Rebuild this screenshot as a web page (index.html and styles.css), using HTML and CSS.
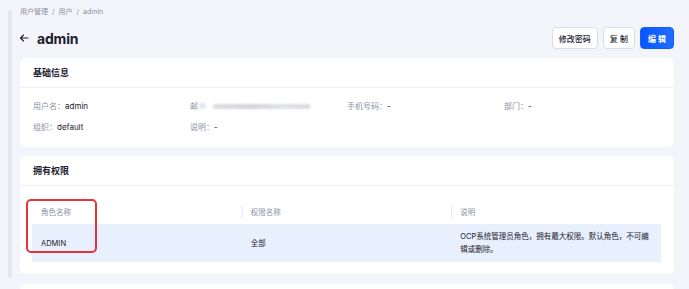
FILE: index.html
```html
<!DOCTYPE html>
<html lang='zh-CN'>
<head>
	<meta charset='UTF-8'>
	<meta name='viewport' content='width=device-width, initial-scale=1.0'>
	<title>用户 - admin</title>
	<link rel="stylesheet" href="styles.css">
</head>
<body>
	<div class='page'>
		<div class='rail'></div>
		<div class='main'>
			<div class='crumbs'>
				<span>用户管理</span><span class='sep'>/</span><span>用户</span><span class='sep'>/</span><span>admin</span>
			</div>

			<div class='title-row'>
				<div class='title'>
					<svg class='back' width='10' height='10' viewBox='0 0 10 10'>
						<path d='M9 5H1.5M4.5 2L1.5 5l3 3' fill='none' stroke='#1c2130' stroke-width='1.1' stroke-linecap='round' stroke-linejoin='round'/>
					</svg>
					<span>admin</span>
				</div>
				<div class='actions'>
					<button class='btn'>修改密码</button>
					<button class='btn'>复 制</button>
					<button class='btn btn-primary'>编 辑</button>
				</div>
			</div>

			<div class='card'>
				<div class='card-head'>基础信息</div>
				<div class='info-grid'>
					<div><span class='lbl'>用户名：</span>admin</div>
					<div><span class='lbl'>邮</span><span class='blur-a'></span><span class='blur-b'></span></div>
					<div><span class='lbl'>手机号码：</span>-</div>
					<div><span class='lbl'>部门：</span>-</div>
					<div><span class='lbl'>组织：</span>default</div>
					<div><span class='lbl'>说明：</span>-</div>
				</div>
			</div>

			<div class='card'>
				<div class='card-head'>拥有权限</div>
				<div class='card-body'>
					<div class='table'>
						<div class='th'>角色名称</div>
						<div class='th th-sep'>权限名称</div>
						<div class='th th-sep'>说明</div>
						<div class='td'>ADMIN</div>
						<div class='td'>全部</div>
						<div class='td td-desc'>OCP系统管理员角色，拥有最大权限。默认角色，不可编辑或删除。</div>
						<div class='mark'></div>
					</div>
				</div>
			</div>

			<div class='card card-more'></div>
		</div>
	</div>
</body>
</html>
```

FILE: styles.css
```css
html, body{
	margin:0;
	height:100%;
	overflow:hidden;
	background-color:#f4f5fa;
	font-family: Inter, "Noto Sans CJK SC", sans-serif;
	color:#1c2130;
}
.page{
	display:flex;
	align-items:flex-start;
	padding-left:8px;
}
.rail{
	flex:0 0 4px;
	height:268px;
	margin-top:10px;
	border-radius:2px;
	background-color:#e2e7f0;
}
.main{
	width:654px;
	margin-left:8px;
	padding-top:6px;
	display:flex;
	flex-direction:column;
}
.crumbs{
	font-size:7px;
	line-height:12px;
	color:#8a91a1;
	display:flex;
}
.crumbs .sep{
	margin:0 4px;
}
.title-row{
	display:flex;
	align-items:center;
	justify-content:space-between;
	margin-top:9px;
	height:22px;
}
.title{
	display:flex;
	align-items:center;
	font-size:14px;
	font-weight:700;
	letter-spacing:-.2px;
}
.back{
	margin:0 8px 0 -1px;
}
.actions{
	display:flex;
	gap:5px;
}
.btn{
	font-family:inherit;
	font-size:8px;
	font-weight:500;
	height:22px;
	padding:0 6px;
	border:1px solid #d9dde7;
	border-radius:4px;
	background-color:white;
	color:#1c2130;
}
.btn-primary{
	border-color:#0f5fff;
	background:linear-gradient(90deg, #0a56ff, #1f6dff);
	color:white;
	font-weight:600;
	padding:0 7px;
}
.card{
	margin-top:9px;
	background-color:white;
	border-radius:6px;
}
.card-head{
	height:29px;
	line-height:29px;
	padding-left:13px;
	font-size:9px;
	font-weight:700;
	border-bottom:1px solid #eceef4;
}
.info-grid{
	display:grid;
	grid-template-columns:repeat(4, 1fr);
	row-gap:9px;
	padding:12px 13px 14px 13px;
	font-size:8px;
	line-height:12px;
}
.lbl{
	color:#8a91a1;
}
.blur-a{
	display:inline-block;
	width:7px;
	height:6px;
	margin-left:1px;
	background-color:#e6e8ee;
	filter:blur(1px);
}
.blur-b{
	display:inline-block;
	width:97px;
	height:5px;
	margin-left:7px;
	background:linear-gradient(90deg, #dcdee4, #d2d4da 40%, #e0e2e7 70%, #d8dae0);
	filter:blur(.8px);
}
.card-body{
	padding:13px 13px 12px 12px;
}
.table{
	position:relative;
	display:grid;
	grid-template-columns:repeat(3, 1fr);
	font-size:7.5px;
}
.th{
	height:25px;
	display:flex;
	align-items:center;
	padding-left:9px;
	color:#8a91a1;
}
.th-sep{
	position:relative;
}
.th-sep::before{
	content:'';
	position:absolute;
	left:0;
	top:7px;
	height:12px;
	border-left:1px solid #e7e9ef;
}
.td{
	min-height:38px;
	display:flex;
	align-items:center;
	padding:0 10px 0 9px;
	line-height:13px;
	background-color:#e8effd;
}
.mark{
	position:absolute;
	left:-6px;
	top:0;
	width:71px;
	height:54px;
	box-sizing:border-box;
	border:2px solid #e5353b;
	border-radius:5px;
}
.card-more{
	margin-top:10px;
	height:6px;
	border-radius:6px 6px 0 0;
}
```
